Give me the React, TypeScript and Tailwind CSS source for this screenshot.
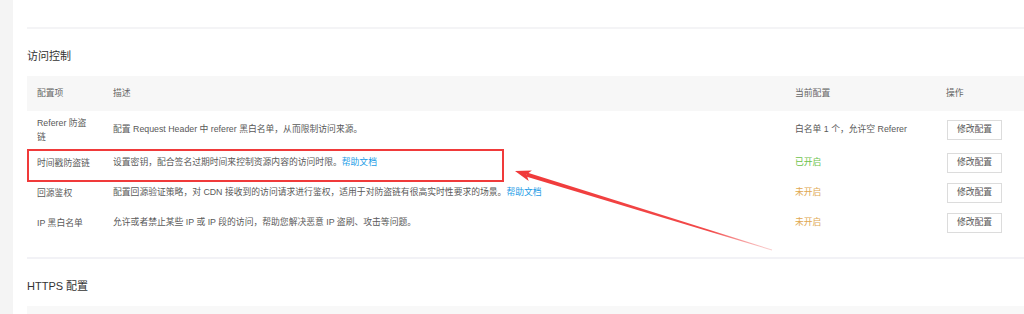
const rows = [
  {
    name: "Referer 防盗链",
    desc: "配置 Request Header 中 referer 黑白名单，从而限制访问来源。",
    link: false,
    status: "白名单 1 个，允许空 Referer",
    tone: "text-[#595959]",
    h: "h-[37px]",
  },
  {
    name: "时间戳防盗链",
    desc: "设置密钥，配合签名过期时间来控制资源内容的访问时限。",
    link: true,
    status: "已开启",
    tone: "text-[#6cc24a]",
    h: "h-[30px]",
  },
  {
    name: "回源鉴权",
    desc: "配置回源验证策略，对 CDN 接收到的访问请求进行鉴权，适用于对防盗链有很高实时性要求的场景。",
    link: true,
    status: "未开启",
    tone: "text-[#e0a850]",
    h: "h-[30px]",
  },
  {
    name: "IP 黑白名单",
    desc: "允许或者禁止某些 IP 或 IP 段的访问，帮助您解决恶意 IP 盗刷、攻击等问题。",
    link: false,
    status: "未开启",
    tone: "text-[#e0a850]",
    h: "h-[30px]",
  },
];

const cols = "grid grid-cols-[76px_682px_151px_1fr] items-center";

export default function App() {
  return (
    <div
      className="relative flex h-[314px] w-[1024px] overflow-hidden bg-white text-[8.8px] text-[#595959]"
      style={{ fontFamily: '"Liberation Sans", "Noto Sans CJK SC", sans-serif' }}
    >
      <div className="w-[13px] shrink-0 bg-[#f4f4f4]" />
      <main className="flex flex-1 flex-col pl-[14px] pt-[27px]">
        <div className="h-[2px] bg-[#f4f4f6]" />
        <h2 className="mt-[19px] text-[11px] leading-[16px] text-[#333]">访问控制</h2>

        <section className="mt-[12px]">
          <div className={`${cols} h-[35px] bg-[#f7f7f7] text-[#666]`}>
            <span className="pl-[10px]">配置项</span>
            <span className="pl-[10px]">描述</span>
            <span className="pl-[10px]">当前配置</span>
            <span className="pl-[10px]">操作</span>
          </div>
          {rows.map((r) => (
            <div key={r.name} className={`${cols} ${r.h}`}>
              <span className="px-[10px] leading-[14px]">{r.name}</span>
              <span className="pl-[10px] whitespace-nowrap">
                {r.desc}
                {r.link && <a className="text-[#1a9be6]">帮助文档</a>}
              </span>
              <span className={`pl-[10px] ${r.tone}`}>{r.status}</span>
              <span className="pl-[11px]">
                <button className="h-[20px] w-[55px] border border-[#dcdcdc] bg-white text-[8.8px] text-[#555]">
                  修改配置
                </button>
              </span>
            </div>
          ))}
        </section>

        <div className="mt-[19px] h-[2px] bg-[#f2f2f6]" />
        <h2 className="mt-[19px] text-[11px] leading-[16px] text-[#333]">HTTPS 配置</h2>
        <div className="mt-[12px] flex-1 bg-[#f8f8f8]" />
      </main>

      {/* annotation overlay */}
      <div className="pointer-events-none absolute left-[27px] top-[149px] h-[33px] w-[477px] border-2 border-[#f03a3a]" />
      <svg className="pointer-events-none absolute left-0 top-0" width="1024" height="314" viewBox="0 0 1024 314">
        <defs>
          <linearGradient id="shaft" gradientUnits="userSpaceOnUse" x1="526" y1="174" x2="772" y2="250">
            <stop offset="0" stopColor="#f03a3a" />
            <stop offset="0.75" stopColor="#f24a4a" />
            <stop offset="1" stopColor="#f5a0a0" stopOpacity="0.5" />
          </linearGradient>
        </defs>
        <polygon points="527,172.6 526,176.4 771.9,250.4 772.1,249.6" fill="url(#shaft)" />
        <polygon points="515,171 531.9,170.4 526.5,174.5 528.7,181" fill="#f03a3a" />
      </svg>
    </div>
  );
}
